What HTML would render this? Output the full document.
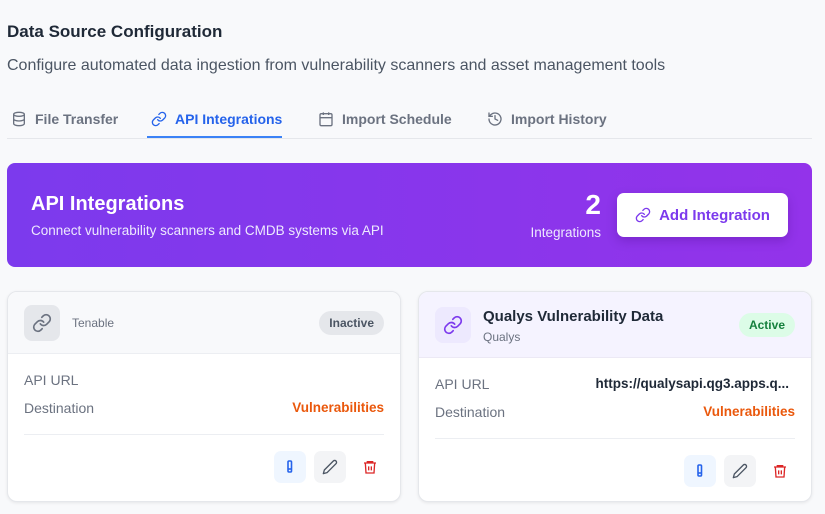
<!DOCTYPE html>
<html><head><meta charset="utf-8"><style>
*{box-sizing:border-box;margin:0;padding:0}
body{width:825px;height:514px;overflow:hidden;background:#f8f9fb;font-family:"Liberation Sans",sans-serif;position:relative;color:#1f2937}
.a{position:absolute}
.tab{position:absolute;top:111px;font-size:14px;font-weight:bold;color:#6b7280;display:flex;align-items:center;gap:8px}
.tab svg{width:16px;height:16px}
.card{position:absolute;top:291px;height:211px;background:#fff;border:1px solid #e5e7eb;border-radius:10px;box-shadow:0 1px 3px rgba(0,0,0,.08);overflow:hidden}
.hdr{position:absolute;left:0;right:0;top:0;border-bottom:1px solid #ece9f5}
.ico{position:absolute;width:36px;height:36px;border-radius:8px;display:flex;align-items:center;justify-content:center}
.lbl{position:absolute;font-size:14px;color:#6b7280}
.vul{position:absolute;font-size:13.5px;font-weight:bold;color:#ea580c}
.btn{position:absolute;width:32px;height:32px;border-radius:7px;display:flex;align-items:center;justify-content:center}
.badge{position:absolute;height:24px;border-radius:12px;font-size:12px;font-weight:bold;padding:0 10px;line-height:24px}
</style></head><body>
<div class="a" style="left:7px;top:22px;font-size:17px;font-weight:bold;color:#1f2937">Data Source Configuration</div>
<div class="a" style="left:7px;top:57px;font-size:16px;color:#4b5563">Configure automated data ingestion from vulnerability scanners and asset management tools</div>

<div class="tab" style="left:11px"><svg viewBox="0 0 24 24" fill="none" stroke="#6b7280" stroke-width="2"><ellipse cx="12" cy="5" rx="8" ry="3"/><path d="M4 5v14c0 1.7 3.6 3 8 3s8-1.3 8-3V5M4 12c0 1.7 3.6 3 8 3s8-1.3 8-3"/></svg>File Transfer</div>
<div class="tab" style="left:151px;color:#2563eb"><svg viewBox="0 0 24 24" fill="none" stroke="#2563eb" stroke-width="2" stroke-linecap="round"><path d="M10 13a5 5 0 0 0 7.54.54l3-3a5 5 0 0 0-7.07-7.07l-1.72 1.71"/><path d="M14 11a5 5 0 0 0-7.54-.54l-3 3a5 5 0 0 0 7.07 7.07l1.71-1.71"/></svg>API Integrations</div>
<div class="tab" style="left:318px"><svg viewBox="0 0 24 24" fill="none" stroke="#6b7280" stroke-width="2"><rect x="3" y="4" width="18" height="18" rx="2"/><path d="M16 2v4M8 2v4M3 10h18"/></svg>Import Schedule</div>
<div class="tab" style="left:487px"><svg viewBox="0 0 24 24" fill="none" stroke="#6b7280" stroke-width="2" stroke-linecap="round"><path d="M3 12a9 9 0 1 0 3-6.7L3 8"/><path d="M3 3v5h5M12 7v5l4 2"/></svg>Import History</div>
<div class="a" style="left:7px;top:138px;width:805px;height:1px;background:#e5e7eb"></div>
<div class="a" style="left:147px;top:136px;width:135px;height:2px;background:#3b82f6"></div>

<div class="a" style="left:7px;top:163px;width:805px;height:104px;border-radius:8px;background:linear-gradient(90deg,#7c3aed,#9333ea)">
<div class="a" style="left:24px;top:30px;font-size:20px;font-weight:bold;color:#fff">API Integrations</div>
<div class="a" style="left:24px;top:60px;font-size:13.5px;color:#ede9fe">Connect vulnerability scanners and CMDB systems via API</div>
<div class="a" style="left:520px;top:26px;width:74px;text-align:right;font-size:28px;font-weight:bold;color:#fff">2</div>
<div class="a" style="left:500px;top:62px;width:94px;text-align:right;font-size:13.5px;color:#ede9fe">Integrations</div>
<div class="a" style="left:610px;top:30px;width:171px;height:44px;background:#fff;border-radius:7px;box-shadow:0 4px 10px rgba(60,0,120,.25);display:flex;align-items:center;justify-content:center;gap:8px;font-size:15px;font-weight:bold;color:#7c3aed"><svg width="16" height="16" viewBox="0 0 24 24" fill="none" stroke="#7c3aed" stroke-width="2" stroke-linecap="round"><path d="M10 13a5 5 0 0 0 7.54.54l3-3a5 5 0 0 0-7.07-7.07l-1.72 1.71"/><path d="M14 11a5 5 0 0 0-7.54-.54l-3 3a5 5 0 0 0 7.07 7.07l1.71-1.71"/></svg>Add Integration</div>
</div>

<div class="card" style="left:7px;width:394px">
<div class="hdr" style="height:62px;background:#f8f9fb;border-color:#eceef2"></div>
<div class="ico" style="left:16px;top:13px;background:#e5e7eb"><svg width="20" height="20" viewBox="0 0 24 24" fill="none" stroke="#6b7280" stroke-width="2" stroke-linecap="round"><path d="M10 13a5 5 0 0 0 7.54.54l3-3a5 5 0 0 0-7.07-7.07l-1.72 1.71"/><path d="M14 11a5 5 0 0 0-7.54-.54l-3 3a5 5 0 0 0 7.07 7.07l1.71-1.71"/></svg></div>
<div class="a" style="left:64px;top:24px;font-size:12px;color:#6b7280">Tenable</div>
<div class="badge" style="right:16px;top:19px;background:#e5e7eb;color:#4b5563">Inactive</div>
<div class="lbl" style="left:16px;top:80px">API URL</div>
<div class="lbl" style="left:16px;top:108px">Destination</div>
<div class="vul" style="right:16px;top:108px">Vulnerabilities</div>
<div class="a" style="left:16px;right:16px;top:142px;height:1px;background:#eceef2"></div>
<div class="btn" style="left:266px;top:159px;background:#eff6ff"><svg width="14" height="16" viewBox="0 0 14 16" fill="none" stroke="#2563eb" stroke-width="1.6"><rect x="5" y="2" width="3.5" height="11" rx="1"/><path d="M5 10h3.5"/></svg></div>
<div class="btn" style="left:306px;top:159px;background:#f3f4f6"><svg width="16" height="16" viewBox="0 0 24 24" fill="none" stroke="#4b5563" stroke-width="2" stroke-linejoin="round"><path d="M17 3a2.8 2.8 0 1 1 4 4L7.5 20.5 2 22l1.5-5.5Z"/></svg></div>
<div class="btn" style="left:346px;top:159px"><svg width="16" height="16" viewBox="0 0 24 24" fill="none" stroke="#dc2626" stroke-width="2"><path d="M3 6h18M8 6V4h8v2M5 6l1 15h12l1-15M10 11v6M14 11v6"/></svg></div>
</div>

<div class="card" style="left:418px;width:394px">
<div class="hdr" style="height:66px;background:#f5f3ff"></div>
<div class="ico" style="left:16px;top:15px;background:#ede9fe"><svg width="20" height="20" viewBox="0 0 24 24" fill="none" stroke="#7c3aed" stroke-width="2" stroke-linecap="round"><path d="M10 13a5 5 0 0 0 7.54.54l3-3a5 5 0 0 0-7.07-7.07l-1.72 1.71"/><path d="M14 11a5 5 0 0 0-7.54-.54l-3 3a5 5 0 0 0 7.07 7.07l1.71-1.71"/></svg></div>
<div class="a" style="left:64px;top:16px;font-size:15px;font-weight:bold;color:#1f2937">Qualys Vulnerability Data</div>
<div class="a" style="left:64px;top:38px;font-size:12px;color:#6b7280">Qualys</div>
<div class="badge" style="right:16px;top:21px;background:#dcfce7;color:#15803d">Active</div>
<div class="lbl" style="left:16px;top:84px">API URL</div>
<div class="a" style="right:22px;top:84px;font-size:13.5px;font-weight:bold;color:#1f2937">https://qualysapi.qg3.apps.q...</div>
<div class="lbl" style="left:16px;top:112px">Destination</div>
<div class="vul" style="right:16px;top:112px">Vulnerabilities</div>
<div class="a" style="left:16px;right:16px;top:146px;height:1px;background:#eceef2"></div>
<div class="btn" style="left:265px;top:163px;background:#eff6ff"><svg width="14" height="16" viewBox="0 0 14 16" fill="none" stroke="#2563eb" stroke-width="1.6"><rect x="5" y="2" width="3.5" height="11" rx="1"/><path d="M5 10h3.5"/></svg></div>
<div class="btn" style="left:305px;top:163px;background:#f3f4f6"><svg width="16" height="16" viewBox="0 0 24 24" fill="none" stroke="#4b5563" stroke-width="2" stroke-linejoin="round"><path d="M17 3a2.8 2.8 0 1 1 4 4L7.5 20.5 2 22l1.5-5.5Z"/></svg></div>
<div class="btn" style="left:345px;top:163px"><svg width="16" height="16" viewBox="0 0 24 24" fill="none" stroke="#dc2626" stroke-width="2"><path d="M3 6h18M8 6V4h8v2M5 6l1 15h12l1-15M10 11v6M14 11v6"/></svg></div>
</div>
</body></html>
